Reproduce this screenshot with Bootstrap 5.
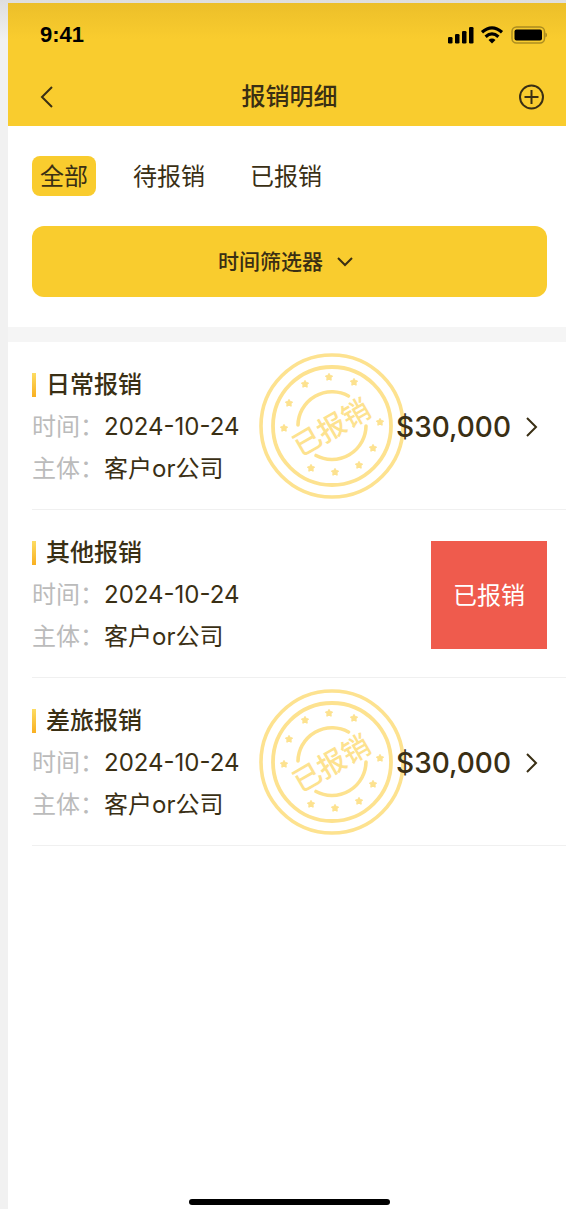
<!DOCTYPE html>
<html lang="zh-CN">
<head>
<meta charset="utf-8">
<meta name="viewport" content="width=device-width, initial-scale=1">
<title>报销明细</title>
<link rel="stylesheet" href="https://cdn.jsdelivr.net/npm/bootstrap@5.3.0/dist/css/bootstrap.min.css">
<style>
  :root { --brand: #f9cc2e; --ink: #3a2f14; --line: #f5f5f5; }
  body { font-family: Inter, "Noto Sans CJK SC", sans-serif; font-size: 24px; color: var(--ink); background: linear-gradient(#dedede, #f1f1f1 40px) #f1f1f1 no-repeat; }
  button { font-family: inherit; }
  .screen { margin: 3px 0 0 8px; min-height: calc(100vh - 3px); background: #fff; }
  .topbar { background: linear-gradient(#ecbf2a, var(--brand) 36px); padding: 0 19px 0 24px; }
  .status { height: 63px; padding-left: 8px; }
  .clock { font: bold 22px/28px "Liberation Sans", sans-serif; color: #000; }
  .titlebar { height: 60px; }
  .titlebar h1, .filter, .entry h2 { font-weight: 500; }
  .titlebar h1 { font-size: 24px; line-height: 36px; padding-top: 2px; }
  .iconbtn { width: 30px; height: 30px; padding: 0; border: 0; background: none; color: inherit; }
  .iconbtn svg, .filter svg, .amount svg { display: block; fill: none; stroke: currentColor; stroke-width: 2; }
  .filters { padding: 30px 19px 30px 24px; gap: 30px; border-bottom: 15px solid var(--line); }
  .tabs { gap: 29px; }
  .tab { height: 40px; padding: 2px 8px 0; border: 0; border-radius: 8px; background: none; color: inherit; line-height: 38px; }
  .tab.active { background: var(--brand); }
  .filter { height: 71px; border: 0; border-radius: 12px; background: var(--brand); color: inherit; font-size: 21px; gap: 10px; }
  .entry { margin-left: 24px; padding: 22px 19px 19px 0; border-bottom: 1px solid #f0f0f0; }
  .entry h2 { font-size: 24px; line-height: 42px; gap: 10px; }
  .entry h2::before { content: ""; width: 4px; height: 24px; background: linear-gradient(#fddc62, #f9b021); }
  .entry dl { line-height: 42px; }
  .entry dt { font-weight: 400; color: #bbb; }
  .stamp { top: 9px; right: 159px; width: 150px; height: 150px; fill: none; stroke: #fde28f; }
  .amount { font-size: 28px; line-height: 42px; font-weight: 500; color: inherit; gap: 8px; }
  .done { width: 116px; height: 108px; padding: 2px 0 0; border: 0; background: #ef5b4d; color: #fff; }
  .homebar { width: 201px; height: 6px; border-radius: 3px; background: #000; }
  .foot { padding: 0 19px 4px 24px; }
</style>
</head>
<body>
<svg width="0" height="0" class="position-absolute" aria-hidden="true">
  <defs>
    <path id="star" stroke="#fde28f" stroke-linejoin="round" d="M0-3.6 1.3-1.5 3.6-1 2 .8 2.2 3.2 0 2.3-2.2 3.2-2 .8-3.600-1-1.3-1.5Z"/>
    <symbol id="stamp" viewBox="-75 -75 150 150">
      <circle r="71" stroke-width="3.6"/>
      <circle r="59" stroke-width="3.8"/>
      <path d="M-34-1A34 34 0 0 1 16.5-30M34 0A34 34 0 0 1-16 29.5" stroke-width="3.6" stroke-linecap="round"/>
      <g fill="#fde28f" stroke="none">
        <use href="#star" x="-3" y="-49"/><use href="#star" x="22" y="-44"/>
        <use href="#star" x="-27" y="-42"/><use href="#star" x="-43" y="-23"/>
        <use href="#star" x="-48" y="2"/><use href="#star" x="48" y="-4"/>
        <use href="#star" x="41" y="22"/><use href="#star" x="27" y="39"/>
        <use href="#star" x="3" y="46"/><use href="#star" x="-21" y="42"/>
        <text transform="rotate(-30)" x="-1" y="11" text-anchor="middle" font-size="28" font-weight="500">已报销</text>
      </g>
    </symbol>
  </defs>
</svg>

<div class="screen d-flex flex-column">
  <header class="topbar">
    <div class="status d-flex align-items-center justify-content-between">
      <span class="clock">9:41</span>
      <svg width="101" height="20" viewBox="0 0 101 20" aria-hidden="true">
        <rect x="2" y="12" width="4.5" height="6.5" rx="1.3"/>
        <rect x="9" y="9" width="4.5" height="9.5" rx="1.3"/>
        <rect x="16" y="6" width="4.5" height="12.5" rx="1.3"/>
        <rect x="23" y="2" width="4.5" height="16.5" rx="1.3"/>
        <g fill="none" stroke="#000" stroke-width="3.2">
          <path d="M36 7.3Q46-1.6 56 7.3"/>
          <path d="M39.600 11.800Q46 6 52.400 11.800"/>
        </g>
        <path d="M42.5 15Q46 12.200 49.5 15L46 18.500Z"/>
        <rect x="66" y="2" width="32.500" height="16" rx="4.500" fill="none" stroke="#000" stroke-opacity=".3" stroke-width="1.500"/>
        <rect x="68.500" y="4.500" width="27.500" height="11" rx="2"/>
        <path d="M99.500 7.500Q101 8.300 101 10T99.500 12.500Z" fill-opacity=".35"/>
      </svg>
    </div>
    <div class="titlebar d-flex align-items-center justify-content-between">
      <button class="iconbtn" type="button" aria-label="返回"><svg width="30" height="30" viewBox="0 0 30 30"><path d="M20 6 10 16 20 26"/></svg></button>
      <h1 class="m-0">报销明细</h1>
      <button class="iconbtn" type="button" aria-label="新增"><svg width="30" height="30" viewBox="0 0 30 30"><circle cx="14.500" cy="16" r="11.500"/><path d="M14.500 9v14M7.500 16h14"/></svg></button>
    </div>
  </header>

  <section class="filters d-flex flex-column">
    <div class="tabs d-flex">
      <button class="tab active" type="button">全部</button>
      <button class="tab" type="button">待报销</button>
      <button class="tab" type="button">已报销</button>
    </div>
    <button class="filter d-flex align-items-center justify-content-center" type="button">时间筛选器
      <svg width="28" height="24" viewBox="0 0 28 24"><path d="M5 8 12 15 19 8"/></svg>
    </button>
  </section>

  <main class="flex-grow-1">
    <article class="entry position-relative d-flex align-items-center justify-content-between">
      <div>
        <h2 class="d-flex align-items-center m-0">日常报销</h2>
        <dl class="m-0">
          <div class="d-flex"><dt>时间：</dt><dd class="m-0">2024-10-24</dd></div>
          <div class="d-flex"><dt>主体：</dt><dd class="m-0">客户or公司</dd></div>
        </dl>
      </div>
      <svg class="stamp position-absolute" aria-hidden="true"><use href="#stamp"/></svg>
      <a class="amount position-relative d-flex align-items-center text-decoration-none" href="#">$30,000
        <svg width="28" height="28" viewBox="0 0 28 28"><path d="M8 5 17 14 8 23"/></svg></a>
    </article>
    <article class="entry d-flex align-items-center justify-content-between">
      <div>
        <h2 class="d-flex align-items-center m-0">其他报销</h2>
        <dl class="m-0">
          <div class="d-flex"><dt>时间：</dt><dd class="m-0">2024-10-24</dd></div>
          <div class="d-flex"><dt>主体：</dt><dd class="m-0">客户or公司</dd></div>
        </dl>
      </div>
      <button class="done" type="button">已报销</button>
    </article>
    <article class="entry position-relative d-flex align-items-center justify-content-between">
      <div>
        <h2 class="d-flex align-items-center m-0">差旅报销</h2>
        <dl class="m-0">
          <div class="d-flex"><dt>时间：</dt><dd class="m-0">2024-10-24</dd></div>
          <div class="d-flex"><dt>主体：</dt><dd class="m-0">客户or公司</dd></div>
        </dl>
      </div>
      <svg class="stamp position-absolute" aria-hidden="true"><use href="#stamp"/></svg>
      <a class="amount position-relative d-flex align-items-center text-decoration-none" href="#">$30,000
        <svg width="28" height="28" viewBox="0 0 28 28"><path d="M8 5 17 14 8 23"/></svg></a>
    </article>
  </main>

  <footer class="foot"><div class="homebar mx-auto"></div></footer>
</div>
<script src="https://cdn.jsdelivr.net/npm/bootstrap@5.3.0/dist/js/bootstrap.bundle.min.js"></script>
</body>
</html>
